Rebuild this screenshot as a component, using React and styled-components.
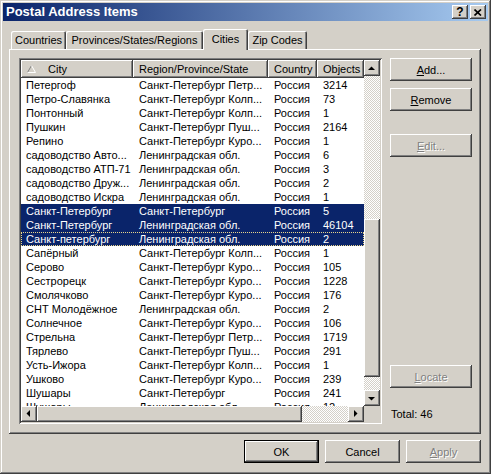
import React from "react"
import styled, { createGlobalStyle, css } from "styled-components"

const FACE = "#d4d0c8"
const SHADOW = "#808080"
const DARK = "#404040"
const SELECT = "#0a246a"

const raised = css`
  box-shadow: inset -1px -1px ${DARK}, inset 1px 1px #fff, inset -2px -2px ${SHADOW},
    inset 2px 2px ${FACE};
`

const sunken = css`
  box-shadow: inset 1px 1px ${SHADOW}, inset -1px -1px #fff, inset 2px 2px ${DARK},
    inset -2px -2px ${FACE};
`

const dither = css`
  background-color: ${FACE};
  background-image: repeating-conic-gradient(#fff 0 25%, ${FACE} 0 50%);
  background-size: 2px 2px;
`

const GlobalStyle = createGlobalStyle`
  html, body {
    margin: 0;
    padding: 0;
    background: ${FACE};
  }
  body {
    font-family: "Liberation Sans", Arial, sans-serif;
    font-size: 11px;
    color: #000;
  }
`

const Window = styled.div`
  width: 491px;
  height: 474px;
  box-sizing: border-box;
  padding: 3px;
  display: flex;
  flex-direction: column;
  background: ${FACE};
  box-shadow: inset -1px -1px ${DARK}, inset 1px 1px ${FACE}, inset -2px -2px ${SHADOW},
    inset 2px 2px #fff;
`

const TitleBar = styled.div`
  height: 18px;
  display: flex;
  align-items: center;
  padding: 0 2px;
  background: linear-gradient(to right, ${SELECT}, #a6caf0);
`

const Caption = styled.div`
  flex: 1;
  color: #fff;
  font-weight: bold;
  font-size: 13px;
  line-height: 18px;
  padding-left: 1px;
`

const CaptionButton = styled.div`
  width: 16px;
  height: 14px;
  margin-left: ${({ $gap }) => $gap || 0}px;
  background: ${FACE};
  ${raised};
  display: flex;
  align-items: center;
  justify-content: center;
  font-weight: bold;
  font-size: 12px;
  line-height: 14px;
`

const Body = styled.div`
  flex: 1;
  display: flex;
  flex-direction: column;
  padding: 8px 7px 0 6px;
`

const TabStrip = styled.div`
  height: 20px;
  display: flex;
  align-items: flex-end;
  padding-left: 2px;
  position: relative;
  z-index: 1;
`

const Tab = styled.div`
  box-sizing: border-box;
  width: ${({ $w }) => $w}px;
  height: ${({ $active }) => ($active ? 21 : 18)}px;
  margin-bottom: ${({ $active }) => ($active ? -1 : 0)}px;
  padding-top: ${({ $active }) => ($active ? 3 : 2)}px;
  text-align: center;
  line-height: 14px;
  background: ${FACE};
  border-radius: 2px 2px 0 0;
  box-shadow: inset 1px 1px #fff, inset -1px 0 ${DARK}, inset -2px 0 ${SHADOW};
`

const Panel = styled.div`
  height: 385px;
  box-sizing: border-box;
  padding: 9px 9px 10px 10px;
  display: flex;
  gap: 8px;
  ${raised};
`

const ListView = styled.div`
  width: 363px;
  height: 366px;
  box-sizing: border-box;
  padding: 2px;
  background: #fff;
  ${sunken};
  display: grid;
  grid-template-columns: 343px 16px;
  grid-template-rows: 346px 16px;
`

const ListMain = styled.div`
  overflow: hidden;
`

const cols = [112, 135, 49, 47]

const Line = styled.div`
  display: grid;
  grid-template-columns: ${cols.map((c) => c + "px").join(" ")};
  height: ${({ $h }) => $h}px;
`

const HeadCell = styled.div`
  display: flex;
  align-items: center;
  padding-left: 6px;
  background: ${FACE};
  ${raised};
  white-space: nowrap;
  overflow: hidden;
`

const SortMark = styled.svg`
  width: 9px;
  height: 8px;
  margin: 0 12px 0 0;
`

const Row = styled.div`
  display: grid;
  grid-template-columns: ${cols.map((c) => c + "px").join(" ")};
  height: 14px;
  line-height: 14px;
  background: ${({ $sel }) => ($sel ? SELECT : "#fff")};
  color: ${({ $sel }) => ($sel ? "#fff" : "#000")};
  ${({ $focus }) =>
    $focus &&
    css`
      outline: 1px dotted #e8d48a;
      outline-offset: -1px;
    `}
`

const Cell = styled.div`
  padding-left: ${({ $first }) => ($first ? 5 : 6)}px;
  white-space: nowrap;
  overflow: hidden;
`

const VScroll = styled.div`
  display: flex;
  flex-direction: column;
`

const HScroll = styled.div`
  display: flex;
`

const ArrowButton = styled.div`
  width: 16px;
  height: 16px;
  flex: none;
  background: ${FACE};
  ${raised};
  display: flex;
  align-items: center;
  justify-content: center;
`

const Track = styled.div`
  ${dither};
  flex: none;
  ${({ $size, $horiz }) => ($horiz ? `width: ${$size}px;` : `height: ${$size}px;`)}
`

const Thumb = styled.div`
  flex: none;
  background: ${FACE};
  ${raised};
  ${({ $size, $horiz }) => ($horiz ? `width: ${$size}px;` : `height: ${$size}px;`)}
`

const Corner = styled.div`
  background: ${FACE};
`

const SideColumn = styled.div`
  width: 82px;
  display: flex;
  flex-direction: column;
`

const Button = styled.button`
  appearance: none;
  border: none;
  margin: 0;
  margin-top: ${({ $top }) => $top || 0}px;
  padding: 0;
  width: ${({ $w }) => $w || 82}px;
  height: 23px;
  font: inherit;
  background: ${FACE};
  color: #000;
  ${({ $default }) =>
    $default
      ? css`
          box-shadow: inset 0 0 0 1px #000, inset -2px -2px ${DARK}, inset 2px 2px #fff,
            inset -3px -3px ${SHADOW};
        `
      : raised}
  &:disabled {
    color: ${SHADOW};
    text-shadow: 1px 1px 0 #fff;
  }
`

const Spacer = styled.div`
  flex: 1;
`

const Total = styled.div`
  height: 36px;
  box-sizing: border-box;
  padding: 20px 0 0 1px;
  line-height: 13px;
`

const Footer = styled.div`
  display: flex;
  justify-content: flex-end;
  gap: 6px;
  margin-top: 6px;
`

const rows = [
  ["Петергоф", "Санкт-Петербург Петр...", "Россия", "3214"],
  ["Петро-Славянка", "Санкт-Петербург Колп...", "Россия", "73"],
  ["Понтонный", "Санкт-Петербург Колп...", "Россия", "1"],
  ["Пушкин", "Санкт-Петербург Пуш...", "Россия", "2164"],
  ["Репино", "Санкт-Петербург Куро...", "Россия", "1"],
  ["садоводство Авто...", "Ленинградская обл.", "Россия", "6"],
  ["садоводство АТП-71", "Ленинградская обл.", "Россия", "3"],
  ["садоводство Друж...", "Ленинградская обл.", "Россия", "2"],
  ["садоводство Искра", "Ленинградская обл.", "Россия", "1"],
  ["Санкт-Петербург", "Санкт-Петербург", "Россия", "5", "sel"],
  ["Санкт-Петербург", "Ленинградская обл.", "Россия", "46104", "sel"],
  ["Санкт-петербург", "Ленинградская обл.", "Россия", "2", "focus"],
  ["Сапёрный", "Санкт-Петербург Колп...", "Россия", "1"],
  ["Серово", "Санкт-Петербург Куро...", "Россия", "105"],
  ["Сестрорецк", "Санкт-Петербург Куро...", "Россия", "1228"],
  ["Смолячково", "Санкт-Петербург Куро...", "Россия", "176"],
  ["СНТ Молодёжное", "Ленинградская обл.", "Россия", "2"],
  ["Солнечное", "Санкт-Петербург Куро...", "Россия", "106"],
  ["Стрельна", "Санкт-Петербург Петр...", "Россия", "1719"],
  ["Тярлево", "Санкт-Петербург Пуш...", "Россия", "291"],
  ["Усть-Ижора", "Санкт-Петербург Колп...", "Россия", "1"],
  ["Ушково", "Санкт-Петербург Куро...", "Россия", "239"],
  ["Шушары", "Санкт-Петербург", "Россия", "241"],
  ["Шушары", "Ленинградская обл.", "Россия", "12"],
]

const arrows = {
  up: "4,10 11,10 7.5,6.5",
  down: "4,7 11,7 7.5,10.5",
  left: "9,4 9,11 5.5,7.5",
  right: "6,4 6,11 9.5,7.5",
}

function Arrow({ dir }) {
  return (
    <ArrowButton>
      <svg width="16" height="16" viewBox="0 0 16 16">
        <polygon points={arrows[dir]} fill="#000" />
      </svg>
    </ArrowButton>
  )
}

export default function App() {
  return (
    <>
      <GlobalStyle />
      <Window>
        <TitleBar>
          <Caption>Postal Address Items</Caption>
          <CaptionButton>?</CaptionButton>
          <CaptionButton $gap={2}>
            <svg width="8" height="7" viewBox="0 0 8 7">
              <path d="M0.5 0.5 L7 6.5 M7 0.5 L0.5 6.5" stroke="#000" strokeWidth="1.7" />
            </svg>
          </CaptionButton>
        </TitleBar>
        <Body>
          <TabStrip>
            <Tab $w={55}>Countries</Tab>
            <Tab $w={137}>Provinces/States/Regions</Tab>
            <Tab $w={45} $active>
              Cities
            </Tab>
            <Tab $w={59}>Zip Codes</Tab>
          </TabStrip>
          <Panel>
            <ListView>
              <ListMain>
                <Line $h={18}>
                  <HeadCell>
                    <SortMark viewBox="0 0 9 8">
                      <path d="M0.5 7.5 L4.5 0.5" stroke={SHADOW} fill="none" />
                      <path d="M4.5 0.5 L8.5 7.5 L0.5 7.5" stroke="#fff" fill="none" />
                    </SortMark>
                    City
                  </HeadCell>
                  <HeadCell>Region/Province/State</HeadCell>
                  <HeadCell>Country</HeadCell>
                  <HeadCell>Objects</HeadCell>
                </Line>
                {rows.map((r, i) => (
                  <Row key={i} $sel={!!r[4]} $focus={r[4] === "focus"}>
                    <Cell $first>{r[0]}</Cell>
                    <Cell>{r[1]}</Cell>
                    <Cell>{r[2]}</Cell>
                    <Cell>{r[3]}</Cell>
                  </Row>
                ))}
              </ListMain>
              <VScroll>
                <Arrow dir="up" />
                <Track $size={143} />
                <Thumb $size={158} />
                <Track $size={13} />
                <Arrow dir="down" />
              </VScroll>
              <HScroll>
                <Arrow dir="left" />
                <Thumb $horiz $size={265} />
                <Track $horiz $size={46} />
                <Arrow dir="right" />
              </HScroll>
              <Corner />
            </ListView>
            <SideColumn>
              <Button>
                <u>A</u>dd...
              </Button>
              <Button $top={7}>
                <u>R</u>emove
              </Button>
              <Button $top={23} disabled>
                <u>E</u>dit...
              </Button>
              <Spacer />
              <Button disabled>
                <u>L</u>ocate
              </Button>
              <Total>Total: 46</Total>
            </SideColumn>
          </Panel>
          <Footer>
            <Button $w={75} $default>
              OK
            </Button>
            <Button $w={75}>Cancel</Button>
            <Button $w={75} disabled>
              <u>A</u>pply
            </Button>
          </Footer>
        </Body>
      </Window>
    </>
  )
}
